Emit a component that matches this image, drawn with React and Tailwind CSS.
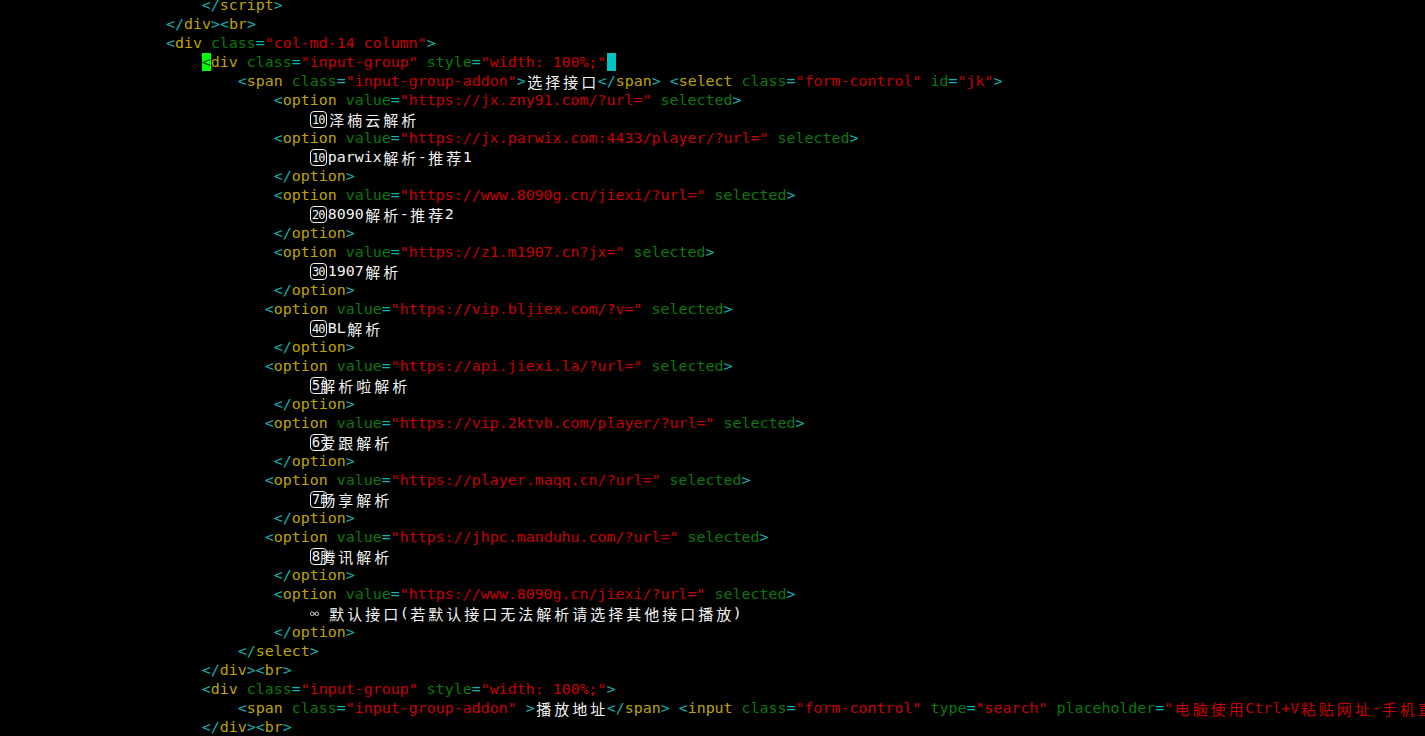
import React from "react";

// colours sampled from the terminal
const COLORS = {
  p: "text-[#10b4b4]",
  t: "text-[#bfa400]",
  a: "text-[#0b7a0b]",
  s: "text-[#c80000]",
  x: "text-[#f2f2f2]",
};

const CJK = /[\u2e80-\u9fff\uff00-\uffef\u3000-\u303f]/;

const tokenize = (s) => {
  const out = [];
  let i = 0;
  let inTag = false;
  while (i < s.length) {
    const c = s[i];
    if (!inTag) {
      if (c === "<") {
        let j = i + 1;
        if (s[j] === "/") j++;
        out.push(["p", s.slice(i, j)]);
        i = j;
        let k = i;
        while (k < s.length && /[a-zA-Z0-9]/.test(s[k])) k++;
        out.push(["t", s.slice(i, k)]);
        i = k;
        inTag = true;
      } else {
        let k = i;
        while (k < s.length && s[k] !== "<") k++;
        out.push(["x", s.slice(i, k)]);
        i = k;
      }
    } else if (c === ">") {
      out.push(["p", ">"]);
      i++;
      inTag = false;
    } else if (c === "=") {
      out.push(["p", "="]);
      i++;
    } else if (c === '"') {
      let k = s.indexOf('"', i + 1);
      if (k < 0) k = s.length - 1;
      out.push(["s", s.slice(i, k + 1)]);
      i = k + 1;
    } else if (c === " ") {
      let k = i;
      while (s[k] === " ") k++;
      out.push(["x", s.slice(i, k)]);
      i = k;
    } else {
      let k = i;
      while (k < s.length && /[^\s=>"]/.test(s[k])) k++;
      out.push(["a", s.slice(i, k)]);
      i = k;
    }
  }
  return out;
};

// split a run so every CJK glyph takes a two-cell (18px) slot
const Run = ({ text, cls }) => {
  const parts = [];
  let buf = "";
  [...text].forEach((ch, idx) => {
    if (CJK.test(ch)) {
      if (buf) parts.push(buf);
      buf = "";
      parts.push(
        <span
          key={"c" + idx}
          className="inline-block w-[18px] text-center align-top font-['Noto_Sans_CJK_SC',sans-serif] text-[15px] leading-[19px]"
        >
          {ch}
        </span>
      );
    } else {
      buf += ch;
    }
  });
  if (buf) parts.push(buf);
  return <span className={cls}>{parts}</span>;
};

const Box = ({ label }) => (
  <span className="inline-flex w-[18px] h-[19px] align-top items-center">
    <span className="flex h-[17px] w-[17px] items-center justify-center rounded-[4px] border border-[#f2f2f2] text-[12px] leading-none text-[#f2f2f2] tracking-[-1px] font-['DejaVu_Sans_Mono',monospace]">
      {label}
    </span>
  </span>
);

// single digit keycap: the frame spills over the next glyph, as in the terminal
const Digit = ({ label }) => (
  <span className="relative inline-block w-[9px] h-[19px] align-top pl-[2px] text-[14px] leading-[19px] text-[#f2f2f2]">
    {label}
    <span className="absolute left-0 top-[1px] h-[17px] w-[17px] rounded-[4px] border border-[#f2f2f2]"></span>
  </span>
);

const Link = () => (
  <span className="inline-block w-[9px] h-[19px] align-top">
    <svg width="9" height="19" viewBox="0 0 9 19">
      <rect x="0.5" y="8" width="3.5" height="3.5" rx="1.5" fill="none" stroke="#cfcfcf" strokeWidth="1" />
      <rect x="5" y="8" width="3.5" height="3.5" rx="1.5" fill="none" stroke="#cfcfcf" strokeWidth="1" />
      <line x1="3.5" y1="9.75" x2="5.5" y2="9.75" stroke="#cfcfcf" strokeWidth="1" />
    </svg>
  </span>
);

const lines = [
  { n: 22, s: "</script>" },
  { n: 18, s: "</div><br>" },
  { n: 18, s: '<div class="col-md-14 column">' },
  { n: 22, s: '<div class="input-group" style="width: 100%;">', cursor: true },
  { n: 26, s: '<span class="input-group-addon">选择接口</span> <select class="form-control" id="jk">' },
  { n: 30, s: '<option value="https://jx.zny91.com/?url=" selected>' },
  { n: 34, box: "10", s: "泽楠云解析" },
  { n: 30, s: '<option value="https://jx.parwix.com:4433/player/?url=" selected>' },
  { n: 34, box: "10", s: "parwix解析-推荐1" },
  { n: 30, s: "</option>" },
  { n: 30, s: '<option value="https://www.8090g.cn/jiexi/?url=" selected>' },
  { n: 34, box: "20", s: "8090解析-推荐2" },
  { n: 30, s: "</option>" },
  { n: 30, s: '<option value="https://z1.m1907.cn?jx=" selected>' },
  { n: 34, box: "30", s: "1907解析" },
  { n: 30, s: "</option>" },
  { n: 29, s: '<option value="https://vip.bljiex.com/?v=" selected>' },
  { n: 34, box: "40", s: "BL解析" },
  { n: 30, s: "</option>" },
  { n: 29, s: '<option value="https://api.jiexi.la/?url=" selected>' },
  { n: 34, one: "5", s: "解析啦解析" },
  { n: 30, s: "</option>" },
  { n: 29, s: '<option value="https://vip.2ktvb.com/player/?url=" selected>' },
  { n: 34, one: "6", s: "爱跟解析" },
  { n: 30, s: "</option>" },
  { n: 29, s: '<option value="https://player.maqq.cn/?url=" selected>' },
  { n: 34, one: "7", s: "畅享解析" },
  { n: 30, s: "</option>" },
  { n: 29, s: '<option value="https://jhpc.manduhu.com/?url=" selected>' },
  { n: 34, one: "8", s: "腾讯解析" },
  { n: 30, s: "</option>" },
  { n: 30, s: '<option value="https://www.8090g.cn/jiexi/?url=" selected>' },
  { n: 34, link: true, s: " 默认接口(若默认接口无法解析请选择其他接口播放)" },
  { n: 30, s: "</option>" },
  { n: 26, s: "</select>" },
  { n: 22, s: "</div><br>" },
  { n: 22, s: '<div class="input-group" style="width: 100%;">' },
  {
    n: 26,
    s: '<span class="input-group-addon" >播放地址</span> <input class="form-control" type="search" placeholder="电脑使用Ctrl+V粘贴网址-手机直接粘贴网址">',
  },
  { n: 22, s: "</div><br>" },
];

const CodeLine = ({ line }) => {
  const plain = line.box || line.one || line.link;
  const tokens = plain ? [["x", line.s]] : tokenize(line.s);
  return (
    <div className="h-[19px] whitespace-pre">
      <span>{" ".repeat(line.n)}</span>
      {line.box && <Box label={line.box} />}
      {line.one && <Digit label={line.one} />}
      {line.link && <Link />}
      {tokens.map(([kind, text], idx) => {
        if (line.cursor && idx === 0) {
          return (
            <span key={idx} className="bg-[#00ff00] text-[#0a3a0a]">
              {text}
            </span>
          );
        }
        if (line.cursor && idx === tokens.length - 1) {
          return (
            <span key={idx} className="bg-[#00c4c4] text-[#00c4c4]">
              {text}
            </span>
          );
        }
        return <Run key={idx} text={text} cls={COLORS[kind]} />;
      })}
    </div>
  );
};

export default function App() {
  return (
    <div className="h-[736px] w-[1425px] overflow-hidden bg-black">
      <div className="flex flex-col -mt-[4px] pl-[4px] font-['DejaVu_Sans_Mono',monospace] text-[14.95px] leading-[19px] text-[#f2f2f2]">
        {lines.map((line, i) => (
          <CodeLine key={i} line={line} />
        ))}
      </div>
    </div>
  );
}
